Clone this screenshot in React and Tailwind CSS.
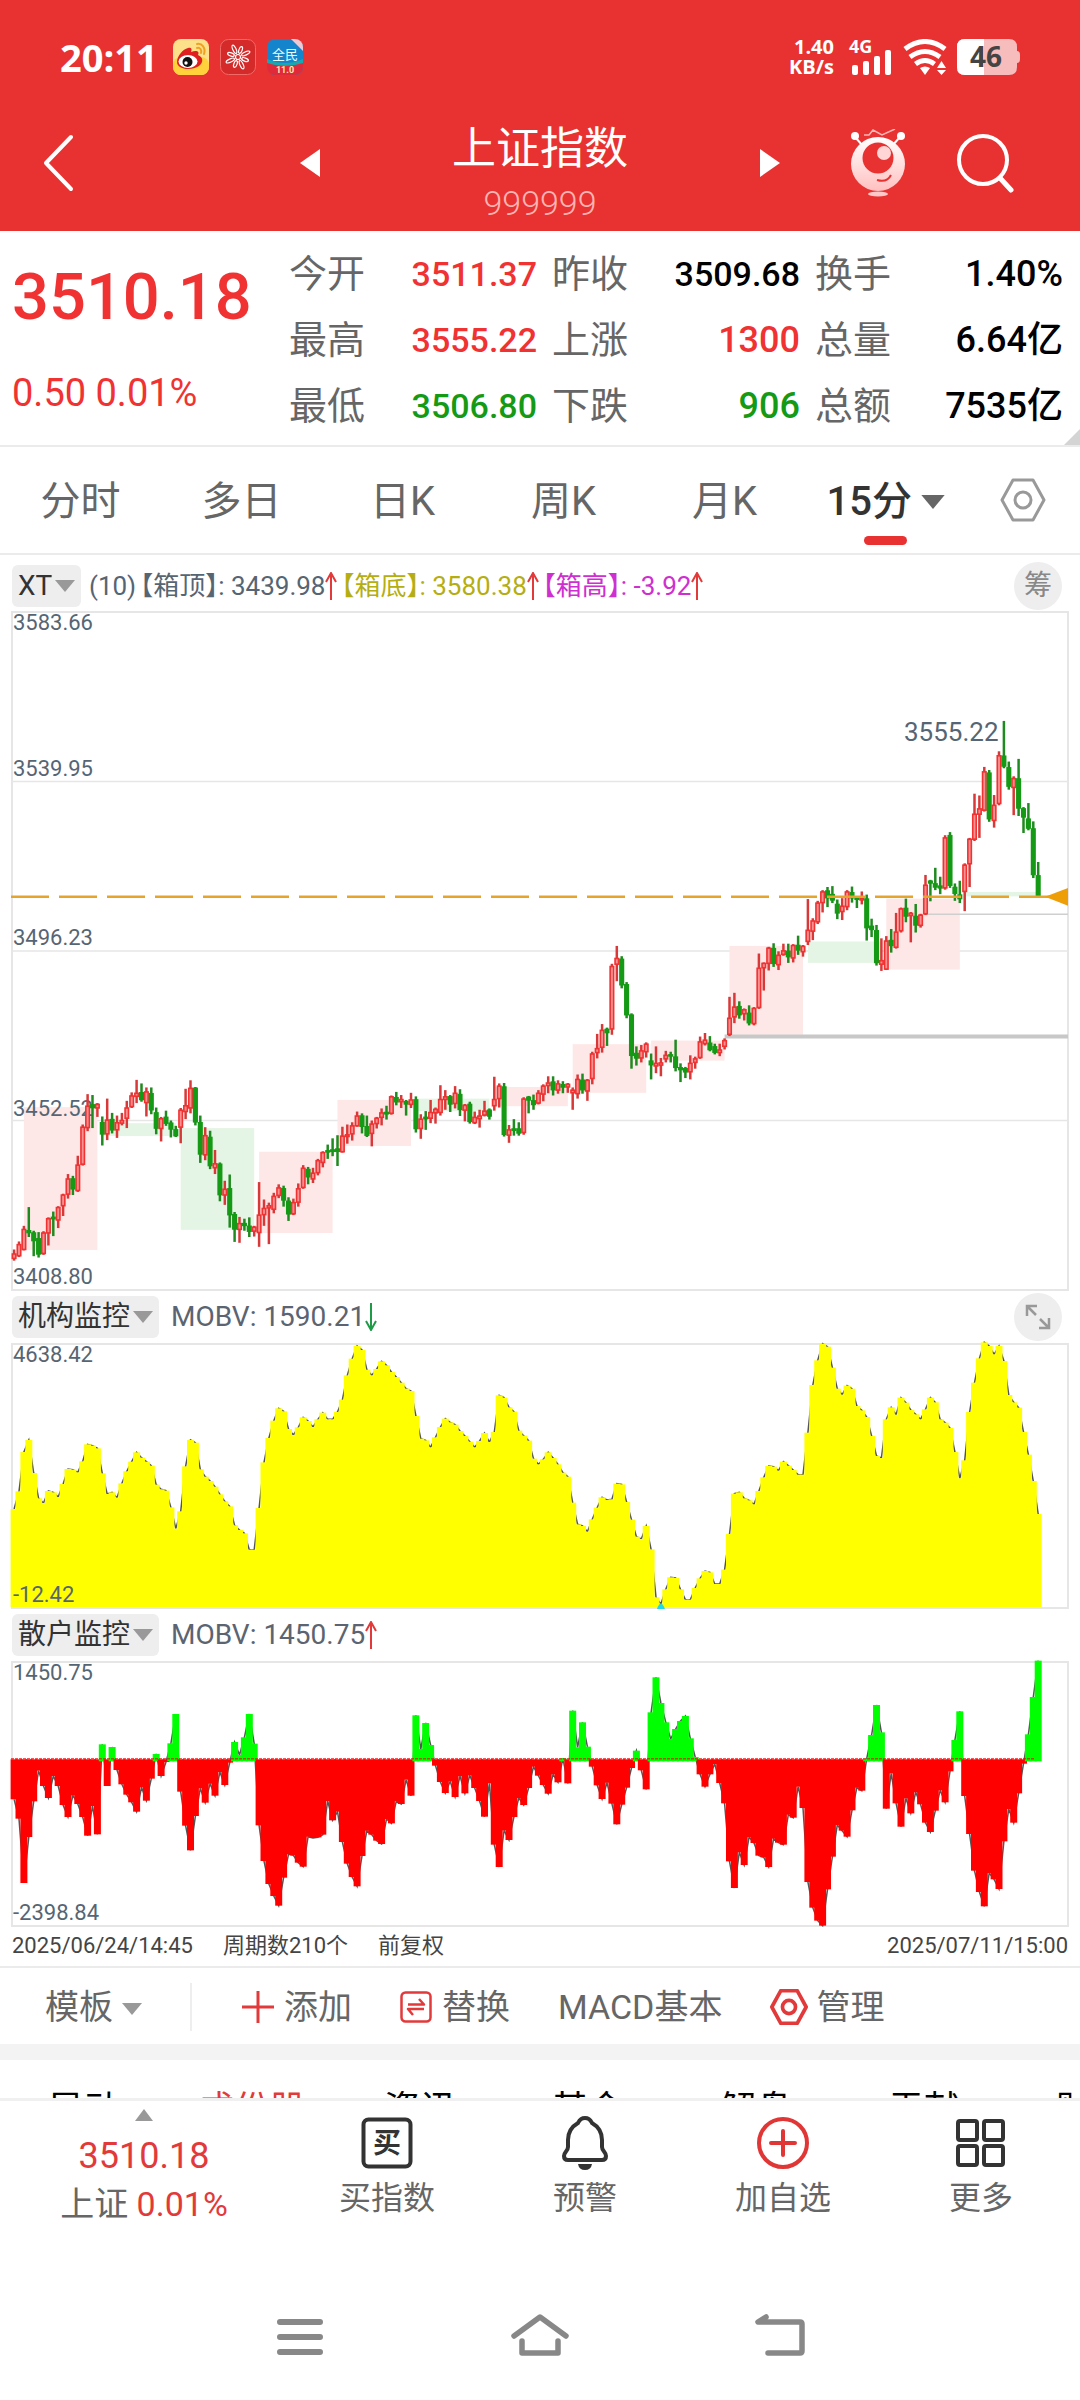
import React, { useState } from 'react';

const UP = '#f03232';
const DOWN = '#149a14';

// x of the first bar and distance between bars
const X0 = 14.1;
const STEP = 4.9;
const barX = (i) => X0 + STEP * i;

// direction (r/g), high, body top, body bottom, low
const CANDLES = `r1455,1464,1476,1480 r1437,1443,1470,1472 r1402,1409,1456,1457 g1360,1412,1418,1427 g1413,1417,1436,1470
g1416,1430,1466,1473 r1414,1417,1465,1467 r1383,1385,1419,1446 g1370,1382,1387,1425 r1358,1360,1390,1407
r1330,1332,1358,1380 r1286,1296,1332,1341 g1290,1296,1320,1333 r1245,1265,1324,1326 r1175,1180,1265,1267
r1107,1133,1183,1190 g1109,1130,1138,1183 r1127,1129,1139,1158 g1157,1170,1197,1222 r1117,1164,1197,1210
g1149,1163,1188,1195 r1155,1170,1188,1205 r1149,1165,1173,1177 r1122,1137,1162,1183 r1103,1110,1136,1138
r1075,1104,1113,1127 g1083,1103,1120,1124 r1092,1101,1127,1157 g1092,1105,1143,1152 g1137,1148,1184,1197
r1158,1161,1185,1213 g1144,1158,1173,1178 g1166,1171,1186,1204 g1178,1186,1201,1203 r1138,1142,1182,1217
r1095,1132,1147,1163 r1076,1093,1139,1150 g1091,1093,1170,1177 g1155,1170,1242,1261 r1181,1199,1244,1255
g1189,1203,1268,1275 r1232,1262,1273,1286 g1260,1263,1333,1347 r1301,1319,1334,1355 g1287,1318,1378,1406
g1371,1376,1410,1438 r1382,1396,1411,1440 g1386,1396,1402,1413 g1383,1402,1415,1427 r1402,1404,1415,1426
r1304,1377,1418,1449 r1343,1362,1378,1402 r1350,1356,1363,1443 r1328,1335,1366,1374 r1309,1316,1335,1340
g1312,1318,1345,1359 g1338,1346,1376,1391 r1341,1349,1376,1378 r1307,1318,1350,1359 r1266,1272,1317,1319
g1270,1275,1293,1309 r1272,1283,1298,1306 r1252,1255,1284,1289 r1235,1237,1261,1271 g1220,1233,1237,1252
g1206,1231,1236,1246 g1199,1229,1236,1268 r1180,1200,1237,1238 r1175,1197,1203,1218 r1170,1177,1197,1211
r1146,1155,1179,1180 g1150,1155,1180,1195 g1155,1179,1200,1203 r1166,1173,1196,1224 r1158,1160,1174,1184
r1139,1148,1160,1177 g1133,1147,1152,1164 r1110,1112,1151,1153 g1102,1114,1125,1132 r1109,1118,1125,1138
g1120,1123,1130,1155 r1104,1119,1131,1138 g1112,1119,1185,1193 r1152,1162,1185,1207 g1145,1158,1163,1187
r1120,1147,1162,1172 r1137,1140,1150,1173 r1087,1118,1149,1155 r1098,1112,1120,1142 g1109,1112,1130,1147
r1089,1104,1129,1139 g1096,1107,1142,1156 r1129,1131,1144,1168 g1124,1129,1169,1173 r1146,1158,1172,1174
r1142,1155,1163,1182 r1122,1144,1155,1157 g1139,1142,1157,1164 r1068,1118,1134,1144 r1083,1088,1118,1137
g1082,1090,1198,1202 r1176,1186,1200,1216 g1163,1184,1189,1200 g1170,1184,1195,1200 r1114,1117,1194,1198
g1111,1113,1121,1150 g1108,1121,1131,1142 r1098,1104,1128,1130 r1085,1088,1108,1123 r1067,1081,1089,1105
g1067,1079,1098,1110 r1076,1083,1099,1106 g1078,1085,1092,1105 r1082,1084,1092,1104 r1092,1097,1105,1142
r1063,1073,1107,1117 g1061,1075,1098,1106 r1073,1075,1101,1122 r1012,1016,1073,1085 r972,1004,1015,1027
r950,963,1003,1014 g958,961,970,999 r815,820,962,974 r775,802,817,854 g798,804,863,870
g856,861,930,937 g926,929,1021,1050 g1000,1015,1027,1043 r997,1009,1027,1036 r991,994,1013,1025
g1016,1032,1042,1074 r1000,1037,1045,1060 r1026,1036,1043,1067 r1010,1019,1029,1036 g1012,1018,1022,1036
g985,1023,1048,1056 g1038,1047,1053,1080 g1046,1049,1058,1071 r1020,1037,1058,1074 r1023,1027,1037,1050
r978,989,1026,1028 r970,985,995,998 g977,992,1008,1011 g994,1000,1014,1018 r994,1007,1015,1022
r982,986,1001,1007 r889,936,974,977 r880,911,935,948 g899,910,930,938 r915,917,928,942
g908,925,948,953 r912,914,950,953 r792,824,914,916 r812,813,825,875 r777,779,815,830
g769,780,815,822 r787,795,818,829 r770,785,795,797 g770,786,800,813 r771,773,803,812
g752,773,785,795 r773,775,789,799 r670,739,766,773 r713,718,743,762 r674,678,722,726
r650,653,679,700 g643,651,668,688 g641,659,673,679 g671,681,702,715 r668,685,699,717
r650,653,688,695 g642,655,668,678 g665,667,671,690 r653,667,673,682 g660,669,735,763
g714,730,739,755 g728,740,813,819 r758,807,817,831 r753,763,828,829 g737,762,775,790
r701,743,779,781 r689,691,742,745 g669,690,709,722 r699,701,708,767 g681,708,729,745
r703,705,730,734 r616,638,704,706 g627,629,635,675 g600,635,644,650 g620,640,646,659
r527,532,646,649 g520,527,640,645 g635,643,658,674 g629,660,670,679 r590,593,654,697
r533,535,592,643 r434,479,537,540 r438,467,481,533 r374,384,472,474 g381,387,491,497
r437,459,495,510 r339,348,457,460 g271,349,373,377 g362,375,418,425 r395,399,421,482
g356,400,467,484 g464,467,487,522 g455,490,512,516 g496,512,616,623 g587,617,664,667`
  .split(/\s+/)
  .map((s) => ({ up: s[0] === 'r', v: s.slice(1).split(',').map(Number) }));

// one box for every 16 bars: colour, top, bottom
const BOXES = [
  ['r', 1136, 1456], ['g', 1172, 1201], ['g', 1183, 1411], ['r', 1236, 1418], ['r', 1120, 1223],
  ['g', 1117, 1145], ['r', 1091, 1134], ['r', 995, 1104], ['r', 987, 1032], ['r', 775, 974],
  ['g', 765, 813], ['r', 669, 828], ['g', 654, 664],
];

const INSTITUTION = [
  657, 604, 486, 450, 549, 625, 639, 603, 607, 621, 582, 537, 539, 547, 514, 463, 467, 475, 550, 612,
  607, 623, 580, 544, 515, 487, 503, 515, 527, 584, 598, 602, 652, 716, 664, 529, 450, 458, 538, 560,
  573, 590, 613, 634, 649, 706, 720, 730, 779, 779, 654, 517, 444, 392, 355, 364, 417, 435, 412, 382,
  393, 411, 388, 368, 388, 388, 366, 329, 256, 206, 168, 180, 239, 256, 237, 214, 226, 246, 261, 278,
  296, 303, 378, 446, 451, 472, 442, 411, 386, 397, 404, 423, 438, 455, 472, 453, 429, 456, 426, 316,
  323, 352, 365, 422, 437, 452, 506, 523, 508, 487, 504, 523, 548, 560, 638, 703, 708, 725, 688, 653,
  622, 630, 628, 581, 583, 636, 689, 740, 747, 708, 778, 922, 942, 898, 862, 864, 898, 929, 929, 894,
  865, 843, 847, 882, 882, 839, 732, 611, 607, 625, 631, 643, 603, 562, 528, 530, 542, 515, 527, 540,
  554, 554, 428, 285, 211, 161, 170, 233, 296, 314, 287, 296, 348, 361, 381, 438, 498, 504, 388, 352,
  374, 323, 338, 360, 373, 388, 358, 323, 337, 388, 398, 414, 486, 565, 511, 366, 278, 205, 157, 168,
  193, 168, 213, 315, 337, 353, 426, 494, 573, 672,
];

const RETAIL = [
  568, 626, 819, 681, 574, 482, 528, 564, 498, 528, 585, 621, 556, 582, 621, 677, 588, 673, 403, 528,
  411, 480, 523, 554, 577, 605, 532, 572, 506, 432, 498, 456, 400, 312, 545, 647, 721, 618, 535, 578,
  521, 557, 486, 525, 458, 396, 435, 382, 312, 401, 646, 753, 822, 858, 887, 803, 733, 736, 758, 770,
  680, 684, 682, 674, 573, 631, 605, 696, 761, 801, 829, 738, 662, 674, 692, 702, 627, 640, 573, 582,
  509, 557, 316, 417, 339, 405, 467, 516, 549, 514, 561, 498, 550, 496, 534, 573, 620, 520, 704, 771,
  661, 690, 621, 564, 585, 534, 470, 497, 525, 551, 493, 517, 445, 520, 302, 412, 337, 410, 470, 526,
  567, 518, 581, 643, 584, 533, 474, 422, 481, 538, 307, 202, 279, 337, 387, 357, 333, 318, 385, 441,
  493, 530, 493, 462, 519, 580, 754, 834, 727, 765, 681, 699, 737, 742, 771, 686, 698, 704, 614, 623,
  530, 594, 816, 893, 932, 947, 838, 740, 645, 662, 680, 601, 533, 542, 446, 375, 285, 367, 596, 490,
  580, 650, 565, 610, 547, 583, 638, 666, 602, 541, 577, 484, 390, 304, 558, 672, 782, 846, 889, 789,
  808, 837, 694, 597, 638, 550, 461, 373, 261, 152,
];

const QUOTES = [
  ['今开', '3511.37', 'text-[34px] text-[#f03232]'],
  ['昨收', '3509.68', 'text-[34px] text-black'],
  ['换手', '1.40%', 'text-[36px] text-black'],
  ['最高', '3555.22', 'text-[34px] text-[#f03232]'],
  ['上涨', '1300', 'text-[36px] text-[#f03232]'],
  ['总量', '6.64亿', 'text-[36px] text-black'],
  ['最低', '3506.80', 'text-[34px] text-[#149a14]'],
  ['下跌', '906', 'text-[36px] text-[#149a14]'],
  ['总额', '7535亿', 'text-[36px] text-black'],
];

function Caret({ className, up }) {
  return (
    <svg className={className} viewBox="0 0 20 12" aria-hidden="true">
      <path d={up ? 'M1 12 L10 0 L19 12 Z' : 'M0 0 H20 L10 12 Z'} fill="currentColor" />
    </svg>
  );
}

function HexIcon({ className, strokeWidth }) {
  return (
    <svg className={className} viewBox="0 0 46 44" fill="none" stroke="currentColor" strokeWidth={strokeWidth} strokeLinejoin="round" aria-hidden="true">
      <path d="M13 2 H33 L44 22 L33 42 H13 L2 22 Z" />
      <circle cx="23" cy="22" r="8" />
    </svg>
  );
}

function TrendArrow({ down }) {
  return (
    <svg className="h-7 w-3 shrink-0" viewBox="0 0 12 28" fill="none" stroke={down ? '#1f9a46' : '#e23a3a'} strokeWidth="2" aria-hidden="true">
      <path d={down ? 'M6 0 V27 M1 18 L6 27 L11 18' : 'M6 28 V1 M1 10 L6 1 L11 10'} />
    </svg>
  );
}

function ChipSelect({ label, value }) {
  return (
    <label className="flex h-[42px] items-center gap-0.5 rounded-md bg-[#eeeeee] px-1.5 text-[#333]">
      <select aria-label={label} className="appearance-none bg-transparent text-[28px] leading-[42px] outline-none">
        <option>{value}</option>
      </select>
      <Caret className="h-3 w-5 text-[#999]" />
    </label>
  );
}

function StatusBar() {
  return (
    <div className="flex h-9 items-center justify-between pr-[60px] pl-[60px]">
      <div className="flex items-center gap-[11px]">
        <span className="mr-1 font-['Open_Sans'] text-[38px] leading-9 font-bold">20:11</span>
        <svg className="size-9" viewBox="0 0 36 36" aria-hidden="true">
          <rect width="36" height="36" rx="8" fill="#fde08a" />
          <rect y="18" width="36" height="18" rx="8" fill="#ffd23c" />
          <path d="M4 23 C4 17 10 10 15 9 C19 8 19 11 18 13 C23 11 27 12 25 16 C30 18 31 23 26 27 C19 32 4 31 4 23 Z" fill="#e02020" />
          <ellipse cx="15" cy="22.500" rx="9.500" ry="6.500" fill="#fff" />
          <circle cx="14.500" cy="23" r="5" fill="#111" />
          <circle cx="13" cy="24" r="1.700" fill="#fff" />
          <path d="M24 5 C29 4 33 9 31 15 M24 9 C27 8 29 11 28 14" fill="none" stroke="#f0a020" strokeWidth="2" strokeLinecap="round" />
        </svg>
        <svg className="size-9" viewBox="0 0 36 36" aria-hidden="true">
          <rect x="0.500" y="0.500" width="35" height="35" rx="8" fill="#d42a2a" stroke="#f06a66" />
          <g fill="none" stroke="#fff" strokeWidth="1.200">
            {[0, 45, 90, 135, 180, 225, 270, 315].map((a, i) => (
              <ellipse key={a} cx="18" cy={i % 2 ? 9.5 : 10.5} rx="1.600" ry={i % 2 ? 4.5 : 3.5} transform={`rotate(${a + 20} 18 18)`} />
            ))}
            <circle cx="18" cy="18" r="2.500" />
          </g>
        </svg>
        <svg className="size-9" viewBox="0 0 36 36" aria-hidden="true">
          <defs>
            <clipPath id="app-tile"><rect width="36" height="36" rx="8" /></clipPath>
          </defs>
          <g clipPath="url(#app-tile)">
            <rect width="36" height="36" fill="#1485cc" />
            <path d="M0 20 Q18 28 36 20 V28 H0 Z" fill="#19a7b0" />
            <path d="M24 0 H36 V12 Z" fill="#f2c8d0" />
            <path d="M0 24 Q18 30 36 24 V36 H0 Z" fill="#e02a3a" />
            <text x="18" y="20" textAnchor="middle" fontSize="13" fill="#e8fbff" fontFamily="Noto Sans CJK SC">全民</text>
            <text x="18" y="34" textAnchor="middle" fontSize="9" fontWeight="700" fill="#ffe9b0" fontFamily="Roboto">11.0</text>
          </g>
        </svg>
      </div>
      <div className="flex items-center gap-2.5">
        <div className="mr-1.5 text-right font-['Open_Sans'] text-[20px] leading-5 font-bold">
          <div>1.40</div>
          <div>KB/s</div>
        </div>
        <svg className="h-9 w-[43px] overflow-visible" viewBox="0 0 43 36" fill="#fff" aria-hidden="true">
          <text x="-1" y="14" fontSize="18" fontWeight="700" fontFamily="Open Sans">4G</text>
          <rect x="2" y="26" width="6" height="10" rx="2" />
          <rect x="13" y="22" width="6" height="14" rx="2" />
          <rect x="24" y="17" width="6" height="19" rx="2" />
          <rect x="35" y="11" width="6" height="25" rx="2" />
        </svg>
        <svg className="h-9 w-11" viewBox="0 0 44 36" fill="none" stroke="#fff" strokeWidth="5" aria-hidden="true">
          <path d="M2 10 Q22 -5 42 10" />
          <path d="M7 18 Q22 7 37 18" />
          <path d="M12.500 25 Q22 18 31.500 25" />
          <path d="M17 29 Q22 26 27 29 L22 36 Z" fill="#fff" stroke="none" />
          <path d="M34 29 L38.500 22 L43 29 Z M34 31 H43 L38.500 36 Z" fill="#fff" stroke="none" />
        </svg>
        <svg className="h-9 w-[63px] overflow-visible" viewBox="0 0 63 36" aria-hidden="true">
          <path d="M8 0 H52 Q60 0 60 8 V12 Q63 12 63 16 V20 Q63 24 60 24 V28 Q60 36 52 36 H8 Q0 36 0 28 V8 Q0 0 8 0 Z" fill="#f7bcbc" />
          <path d="M8 0 H27 V36 H8 Q0 36 0 28 V8 Q0 0 8 0 Z" fill="#fff" />
          <text x="29" y="28" textAnchor="middle" fontSize="28" fontWeight="700" fill="#444" fontFamily="Open Sans">46</text>
        </svg>
      </div>
    </div>
  );
}

function Header() {
  return (
    <header className="h-[231px] bg-[#e83232] pt-[39px] text-white">
      <StatusBar />
      <nav className="mt-[22px] grid h-[132px] grid-cols-[1fr_480px_1fr] items-center">
        <div className="pl-[42px]">
          <button aria-label="返回" className="block">
            <svg className="h-[58px] w-8" viewBox="0 0 32 58" fill="none" stroke="#fff" strokeWidth="4" strokeLinecap="round" strokeLinejoin="round">
              <path d="M29 3 L4 29 L29 55" />
            </svg>
          </button>
        </div>
        <div className="flex items-center justify-between">
          <button aria-label="上一个">
            <svg className="h-7 w-5" viewBox="0 0 20 28"><path d="M20 0 V28 L0 14 Z" fill="#fff" /></svg>
          </button>
          <div className="pt-6 text-center">
            <h1 className="text-[44px] leading-[56px]">上证指数</h1>
            <p className="text-[34px] leading-[52px] font-light text-[#ffb5b3]">999999</p>
          </div>
          <button aria-label="下一个">
            <svg className="h-7 w-5" viewBox="0 0 20 28"><path d="M0 0 V28 L20 14 Z" fill="#fff" /></svg>
          </button>
        </div>
        <div className="flex items-center justify-end gap-[50px] pr-[64px]">
          <button aria-label="智能助手">
            <svg className="h-[68px] w-14" viewBox="0 0 56 68">
              <defs>
                <linearGradient id="robot" x1="0" y1="0" x2="0" y2="1">
                  <stop offset="0" stopColor="#fff" />
                  <stop offset="1" stopColor="#ffc0c0" />
                </linearGradient>
              </defs>
              <path d="M5 8 L13 17 M50 8 L42 17" stroke="#fff" strokeWidth="2" />
              <circle cx="5" cy="7" r="4" fill="#fff" />
              <circle cx="51" cy="7" r="4" fill="#fff" />
              <path d="M14 6 H19 L23 1 L32 6 L45 0" fill="none" stroke="#ffb5b3" strokeWidth="1.500" />
              <circle cx="28" cy="35" r="27" fill="url(#robot)" />
              <circle cx="28" cy="29" r="15.500" fill="#e83232" />
              <circle cx="34" cy="24" r="7" fill="#ffd5d5" />
              <path d="M27 51 Q37 54 41 46" fill="none" stroke="#e83232" strokeWidth="2" />
              <ellipse cx="28" cy="65" rx="10" ry="2.500" fill="#ffc9c9" />
            </svg>
          </button>
          <button aria-label="搜索">
            <svg className="h-[60px] w-[60px]" viewBox="0 0 60 60" fill="none" stroke="#fff" strokeWidth="4" strokeLinecap="round">
              <circle cx="27" cy="27" r="24" />
              <path d="M44 45 L55 57" strokeWidth="5" />
            </svg>
          </button>
        </div>
      </nav>
    </header>
  );
}

function QuotePanel() {
  return (
    <section className="relative flex h-[216px] border-b-2 border-[#ebebeb] pr-[17px] pl-3">
      <div className="w-[277px] shrink-0 pt-[26px] text-[#f03232]">
        <div className="text-[65px] leading-[80px] font-medium">3510.18</div>
        <div className="mt-[34px] text-[38px] leading-[44px]">0.50 0.01%</div>
      </div>
      <dl className="grid flex-1 auto-rows-[66px] grid-cols-3 gap-x-[15px] pt-2.5">
        {QUOTES.map(([name, value, color]) => (
          <div key={name} className="flex items-center justify-between whitespace-nowrap">
            <dt className="text-[38px] leading-[44px] text-[#666]">{name}</dt>
            <dd className={`leading-[44px] font-medium ${color}`}>{value}</dd>
          </div>
        ))}
      </dl>
      <svg className="absolute right-0 bottom-0 size-4" viewBox="0 0 16 16" aria-hidden="true">
        <path d="M16 0 V16 H0 Z" fill="#d4d4d4" />
      </svg>
    </section>
  );
}

function PeriodTabs({ period, setPeriod }) {
  return (
    <nav className="grid h-[108px] grid-cols-[repeat(6,161fr)_114fr] border-b-2 border-[#ebebeb] pt-1 text-[40px] leading-[56px] text-[#666]">
      {['分时', '多日', '日K', '周K', '月K'].map((t) => (
        <button key={t} onClick={() => setPeriod(t)}>
          {t}
        </button>
      ))}
      <div className="relative flex items-center justify-center">
        <label className="flex items-center gap-2 font-medium text-[#333]">
          <select
            aria-label="分钟周期"
            className="appearance-none bg-transparent outline-none"
            onChange={(e) => setPeriod(e.target.value)}
          >
            <option>15分</option>
          </select>
          <Caret className="h-3.5 w-6 text-[#666]" />
        </label>
        {period === '15分' && <span className="absolute bottom-2 h-[9px] w-[43px] rounded-full bg-[#e83232]" />}
      </div>
      <button aria-label="图表设置" className="flex items-center justify-center pb-1 text-[#999]">
        <HexIcon className="h-11 w-[46px]" strokeWidth={3} />
      </button>
    </nav>
  );
}

function Grid({ height, lines = [] }) {
  return (
    <g stroke="#e6e6e6" fill="none">
      <rect x="12" y="0" width="1056" height={height} strokeWidth="2" />
      {lines.map((y) => (
        <path key={y} d={`M12 ${y} H1068`} strokeWidth="1.500" />
      ))}
    </g>
  );
}

function AxisText({ y, children }) {
  return (
    <text x="13" y={y} fontSize="22" fill="#566573">
      {children}
    </text>
  );
}

function CandleChart() {
  const y = (v) => (v - 27) / 2.24;
  return (
    <svg className="block w-full overflow-visible" viewBox="0 0 1080 678" role="img" aria-label="K线图">
      <Grid height={678} lines={[169.5, 339, 508.5]} />
      {BOXES.map(([c, top, bottom], k) => (
        <rect key={k} x={barX(2 + 16 * k)} y={y(top)} width={STEP * 15} height={y(bottom) - y(top)} fill={c === 'r' ? '#fee8e7' : '#e5f5e5'} />
      ))}
      <path d={`M${barX(145)} ${y(978)} H1068`} stroke="#c8c8c8" strokeWidth="4" />
      <path d={`M${barX(186)} ${y(704)} H1068`} stroke="#cfcfcf" strokeWidth="1.500" />
      <AxisText y={18}>3583.66</AxisText>
      <AxisText y={164}>3539.95</AxisText>
      <AxisText y={333}>3496.23</AxisText>
      <AxisText y={504}>3452.52</AxisText>
      <AxisText y={672}>3408.80</AxisText>
      {CANDLES.map(({ up, v: [high, top, bottom, low] }, i) => (
        <g key={i}>
          <path d={`M${barX(i)} ${y(high)} V${y(low)}`} stroke={up ? '#d83838' : '#1f8a1f'} strokeWidth="2.500" />
          <rect
            x={barX(i) - 1.75}
            y={y(top) + 0.5}
            width="3.500"
            height={Math.max(y(bottom) - y(top) - 1, 1)}
            fill={up ? '#f79090' : DOWN}
            stroke={up ? UP : DOWN}
            strokeWidth="1.600"
          />
        </g>
      ))}
      <path d={`M11 ${y(665)} H1062`} stroke="#e5a52d" strokeWidth="2.500" strokeDasharray="38 10" />
      <path d={`M1045 ${y(665)} L1068 ${y(645)} V${y(685)} Z`} fill="#ee9f08" />
      <text x="904" y="129" fontSize="26" fill="#566573">3555.22</text>
    </svg>
  );
}

function InstitutionChart() {
  const y = (v) => (v - 162) / 3;
  return (
    <svg className="block w-full overflow-visible" viewBox="0 0 1080 264" role="img" aria-label="机构监控">
      <Grid height={264} />
      <polyline points={INSTITUTION.map((v, i) => `${barX(i)},${y(v)}`).join(' ')} fill="none" stroke="#555" strokeWidth="1.500" />
      {INSTITUTION.map((v, i) => (
        <rect key={i} x={barX(i) - 3.5} y={y(v)} width="7" height={263 - y(v)} fill="#ffff00" />
      ))}
      <path d={`M${barX(132) - 4} 265 Q${barX(132)} 254 ${barX(132) + 4} 265 Z`} fill="#22d8e8" />
      <AxisText y={18}>4638.42</AxisText>
      <AxisText y={258}>-12.42</AxisText>
    </svg>
  );
}

function RetailChart() {
  const y = (v) => (v - 156) / 3;
  const zero = y(448);
  return (
    <svg className="block w-full overflow-visible" viewBox="0 0 1080 264" role="img" aria-label="散户监控">
      <Grid height={264} />
      <polyline points={RETAIL.map((v, i) => `${barX(i)},${y(v)}`).join(' ')} fill="none" stroke="#555" strokeWidth="1.500" />
      {RETAIL.map((v, i) =>
        v < 448 ? (
          <rect key={i} x={barX(i) - 3.5} y={y(v)} width="7" height={zero + 2 - y(v)} fill="#00ff00" />
        ) : (
          <rect key={i} x={barX(i) - 3.5} y={zero} width="7" height={y(v) - zero} fill="#ff0000" />
        )
      )}
      <path d={`M11 ${zero - 0.5} H1035`} stroke="#ff0000" strokeWidth="1" strokeDasharray="3 1" />
      <AxisText y={18}>1450.75</AxisText>
      <AxisText y={258}>-2398.84</AxisText>
    </svg>
  );
}

function Toolbar() {
  return (
    <div className="flex h-[78px] items-center border-t-2 border-[#ebebeb] pt-0.5 pl-[45px] text-[34px] leading-[48px] text-[#666]">
      <label className="flex w-[147px] items-center gap-2 border-r-2 border-[#eee]">
        <select aria-label="模板" className="appearance-none bg-transparent outline-none">
          <option>模板</option>
        </select>
        <Caret className="mt-1 h-3 w-[22px] text-[#999]" />
      </label>
      <div className="flex items-center gap-12 pl-[50px]">
        <button className="flex items-center gap-2.5">
          <svg className="size-8" viewBox="0 0 32 32" fill="none" stroke="#e23a3a" strokeWidth="3" aria-hidden="true">
            <path d="M16 0 V32 M0 16 H32" />
          </svg>
          添加
        </button>
        <button className="flex items-center gap-2.5">
          <svg className="size-8" viewBox="0 0 32 32" fill="none" stroke="#e23a3a" strokeWidth="2.500" strokeLinejoin="round" aria-hidden="true">
            <rect x="1.500" y="1.500" width="29" height="29" rx="4" />
            <path d="M8 13.500 H24 L19 8 M24 18 H8 L13 24" />
          </svg>
          替换
        </button>
        <button>MACD基本</button>
        <button className="flex items-center gap-2">
          <HexIcon className="h-9 w-[38px] text-[#e23a3a]" strokeWidth={4.5} />
          管理
        </button>
      </div>
    </div>
  );
}

function ActionButton({ label, children }) {
  return (
    <button className="flex flex-col items-center pt-3.5">
      {children}
      <span className="mt-1 text-[32px] leading-[46px] text-[#666]">{label}</span>
    </button>
  );
}

function BottomBar() {
  return (
    <footer className="grid h-[160px] grid-cols-[288fr_repeat(4,198fr)] items-start border-t-[3px] border-[#f0f0f0]">
      <button className="flex flex-col items-center pt-2">
        <Caret up className="h-3 w-5 text-[#999]" />
        <span className="mt-2.5 text-[36px] leading-[50px] text-[#e23a3a]">3510.18</span>
        <span className="text-[34px] leading-[46px] text-[#666]">
          上证 <span className="text-[#e23a3a]">0.01%</span>
        </span>
      </button>
      <ActionButton label="买指数">
        <svg className="h-14 w-[52px]" viewBox="0 0 52 56" aria-hidden="true">
          <rect x="2.500" y="4.500" width="47" height="47" rx="5" fill="none" stroke="#333" strokeWidth="4" />
          <text x="26" y="38" textAnchor="middle" fontSize="28" fontWeight="700" fill="#333" fontFamily="Noto Sans CJK SC">买</text>
        </svg>
      </ActionButton>
      <ActionButton label="预警">
        <svg className="h-14 w-[52px]" viewBox="0 0 52 56" fill="none" stroke="#333" strokeWidth="4" strokeLinejoin="round" aria-hidden="true">
          <path d="M26 3 C21 3 20 6 19 8 C12 12 9 17 9 25 V32 C9 36 5 37 5 41 C5 44 7 45 9 45 H43 C45 45 47 44 47 41 C47 37 43 36 43 32 V25 C43 17 40 12 33 8 C32 6 31 3 26 3 Z" />
          <path d="M19 49 H33 Q32 55 26 55 Q20 55 19 49 Z" fill="#333" stroke="none" />
        </svg>
      </ActionButton>
      <ActionButton label="加自选">
        <svg className="h-14 w-[52px]" viewBox="0 0 52 56" fill="none" stroke="#e03636" strokeWidth="4" strokeLinecap="round" aria-hidden="true">
          <circle cx="26" cy="28" r="24" />
          <path d="M26 16 V40 M14 28 H38" />
        </svg>
      </ActionButton>
      <ActionButton label="更多">
        <svg className="h-14 w-[52px]" viewBox="0 0 52 56" fill="none" stroke="#333" strokeWidth="4" aria-hidden="true">
          <rect x="3" y="6" width="19" height="19" rx="2" />
          <rect x="29" y="6" width="19" height="19" rx="2" />
          <rect x="3" y="31" width="19" height="19" rx="2" />
          <rect x="29" y="31" width="19" height="19" rx="2" />
        </svg>
      </ActionButton>
    </footer>
  );
}

function SystemNav() {
  return (
    <div className="grid grid-cols-3 items-center px-[180px] pt-14 pb-8">
      <button aria-label="最近任务" className="flex justify-center">
        <svg className="h-12 w-[60px]" viewBox="0 0 60 48" stroke="#888" strokeWidth="6" strokeLinecap="round">
          <path d="M10 8 H50 M10 23 H50 M10 38 H50" />
        </svg>
      </button>
      <button aria-label="主页" className="flex justify-center">
        <svg className="h-12 w-[60px]" viewBox="0 0 60 48" fill="none" stroke="#888" strokeWidth="5.500" strokeLinecap="round" strokeLinejoin="round">
          <path d="M4 22 L30 3 L56 22" />
          <path d="M12 27 V39 H48 V27" />
        </svg>
      </button>
      <button aria-label="后退" className="flex justify-center">
        <svg className="h-12 w-[60px]" viewBox="0 0 60 48" fill="none" stroke="#888" strokeWidth="5.500" strokeLinecap="round" strokeLinejoin="round">
          <path d="M16 3 L8 8 H50 Q52 8 52 10 V37 Q52 39 50 39 H18" />
        </svg>
      </button>
    </div>
  );
}

export default function App() {
  const [period, setPeriod] = useState('15分');

  return (
    <div className="min-h-screen w-full overflow-hidden bg-white font-[Roboto,'Noto_Sans_CJK_SC',sans-serif]">
      <Header />
      <QuotePanel />
      <PeriodTabs period={period} setPeriod={setPeriod} />

      <main>
        {/* main indicator */}
        <div className="flex h-[57px] items-center justify-between pt-1 pr-[18px] pl-3">
          <div className="flex items-center gap-1 text-[26px] leading-[40px] whitespace-nowrap text-[#566573] [font-feature-settings:'halt']">
            <ChipSelect label="主图指标" value="XT" />
            <span className="ml-1">(10)</span>
            <span className="flex items-center">【箱顶】: 3439.98<TrendArrow /></span>
            <span className="flex items-center text-[#b5ae12]">【箱底】: 3580.38<TrendArrow /></span>
            <span className="flex items-center text-[#cf2fd0]">【箱高】: -3.92<TrendArrow /></span>
          </div>
          <button className="size-12 rounded-full bg-[#eeeeee] text-[28px] leading-[48px] text-[#888]">筹</button>
        </div>
        <CandleChart />

        <div className="flex h-[54px] items-center justify-between pr-[18px] pl-3">
          <div className="flex items-center gap-3 text-[28px] leading-[40px] text-[#5b6470]">
            <ChipSelect label="副图指标一" value="机构监控" />
            <span className="flex items-center">MOBV: 1590.21<TrendArrow down /></span>
          </div>
          <button aria-label="全屏" className="flex size-12 items-center justify-center rounded-full bg-[#eeeeee]">
            <svg className="size-7" viewBox="0 0 28 28" fill="none" stroke="#999" strokeWidth="2.500">
              <path d="M13 3 H3 V13 M3 3 L12 12 M15 25 H25 V15 M25 25 L16 16" />
            </svg>
          </button>
        </div>
        <InstitutionChart />

        <div className="flex h-[54px] items-center gap-3 pl-3 text-[28px] leading-[40px] text-[#5b6470]">
          <ChipSelect label="副图指标二" value="散户监控" />
          <span className="flex items-center">MOBV: 1450.75<TrendArrow /></span>
        </div>
        <RetailChart />

        <div className="flex h-10 items-center px-3 text-[22px] leading-[30px] text-[#444]">
          <span>2025/06/24/14:45</span>
          <span className="ml-[30px]">周期数210个</span>
          <span className="ml-[30px]">前复权</span>
          <span className="ml-auto">2025/07/11/15:00</span>
        </div>
        <Toolbar />
        <div className="h-4 bg-[#f3f3f3]" />
        <nav className="grid h-[38px] grid-cols-[repeat(7,168px)] overflow-hidden pt-8 text-[36px] leading-9 text-black">
          <button>异动</button>
          <button className="text-[#e23a3a]">成份股</button>
          <button>资讯</button>
          <button>基金</button>
          <button>解盘</button>
          <button>贡献</button>
          <button>财务</button>
        </nav>
      </main>

      <BottomBar />
      <SystemNav />
    </div>
  );
}
